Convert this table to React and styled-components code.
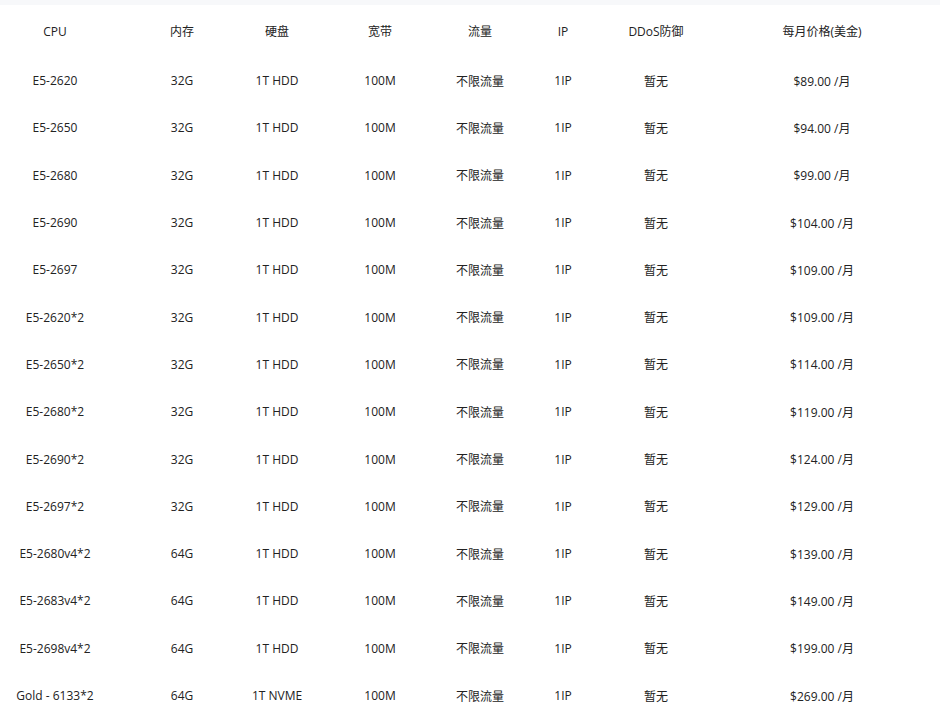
import React from 'react';
import styled, { createGlobalStyle } from 'styled-components';

const GlobalStyle = createGlobalStyle`
  html, body {
    margin: 0;
    padding: 0;
    background: #fff;
  }
  body {
    font-family: "Open Sans", "Noto Sans CJK SC", sans-serif;
    font-size: 12px;
    color: #222;
  }
`;

const Page = styled.div`
  width: 940px;
  overflow: hidden;
`;

const TopStrip = styled.div`
  height: 5px;
  background: #f7f8fa;
`;

// column widths chosen so each column's centre lines up with the reference
const cols = '118px 136px 54px 152px 48px 118px 68px 264px';

const Table = styled.div`
  display: grid;
  grid-template-columns: ${cols};
  width: 958px;
  margin-left: -4px;
`;

const Row = styled.div`
  display: contents;
`;

const Cell = styled.div`
  display: flex;
  align-items: center;
  justify-content: center;
  white-space: nowrap;
  height: ${(p) => (p.$head ? '52px' : '47.3px')};
  color: #222;
`;

const header = ['CPU', '内存', '硬盘', '宽带', '流量', 'IP', 'DDoS防御', '每月价格(美金)'];

const plans = [
  ['E5-2620', '32G', '1T HDD', '89.00'],
  ['E5-2650', '32G', '1T HDD', '94.00'],
  ['E5-2680', '32G', '1T HDD', '99.00'],
  ['E5-2690', '32G', '1T HDD', '104.00'],
  ['E5-2697', '32G', '1T HDD', '109.00'],
  ['E5-2620*2', '32G', '1T HDD', '109.00'],
  ['E5-2650*2', '32G', '1T HDD', '114.00'],
  ['E5-2680*2', '32G', '1T HDD', '119.00'],
  ['E5-2690*2', '32G', '1T HDD', '124.00'],
  ['E5-2697*2', '32G', '1T HDD', '129.00'],
  ['E5-2680v4*2', '64G', '1T HDD', '139.00'],
  ['E5-2683v4*2', '64G', '1T HDD', '149.00'],
  ['E5-2698v4*2', '64G', '1T HDD', '199.00'],
  ['Gold - 6133*2', '64G', '1T NVME', '269.00'],
];

export default function App() {
  return (
    <Page>
      <GlobalStyle />
      <TopStrip />
      <Table>
        <Row>
          {header.map((h) => (
            <Cell $head key={h}>{h}</Cell>
          ))}
        </Row>
        {plans.map(([cpu, ram, disk, price]) => (
          <Row key={cpu}>
            <Cell>{cpu}</Cell>
            <Cell>{ram}</Cell>
            <Cell>{disk}</Cell>
            <Cell>100M</Cell>
            <Cell>不限流量</Cell>
            <Cell>1IP</Cell>
            <Cell>暂无</Cell>
            <Cell>${price} /月</Cell>
          </Row>
        ))}
      </Table>
    </Page>
  );
}
